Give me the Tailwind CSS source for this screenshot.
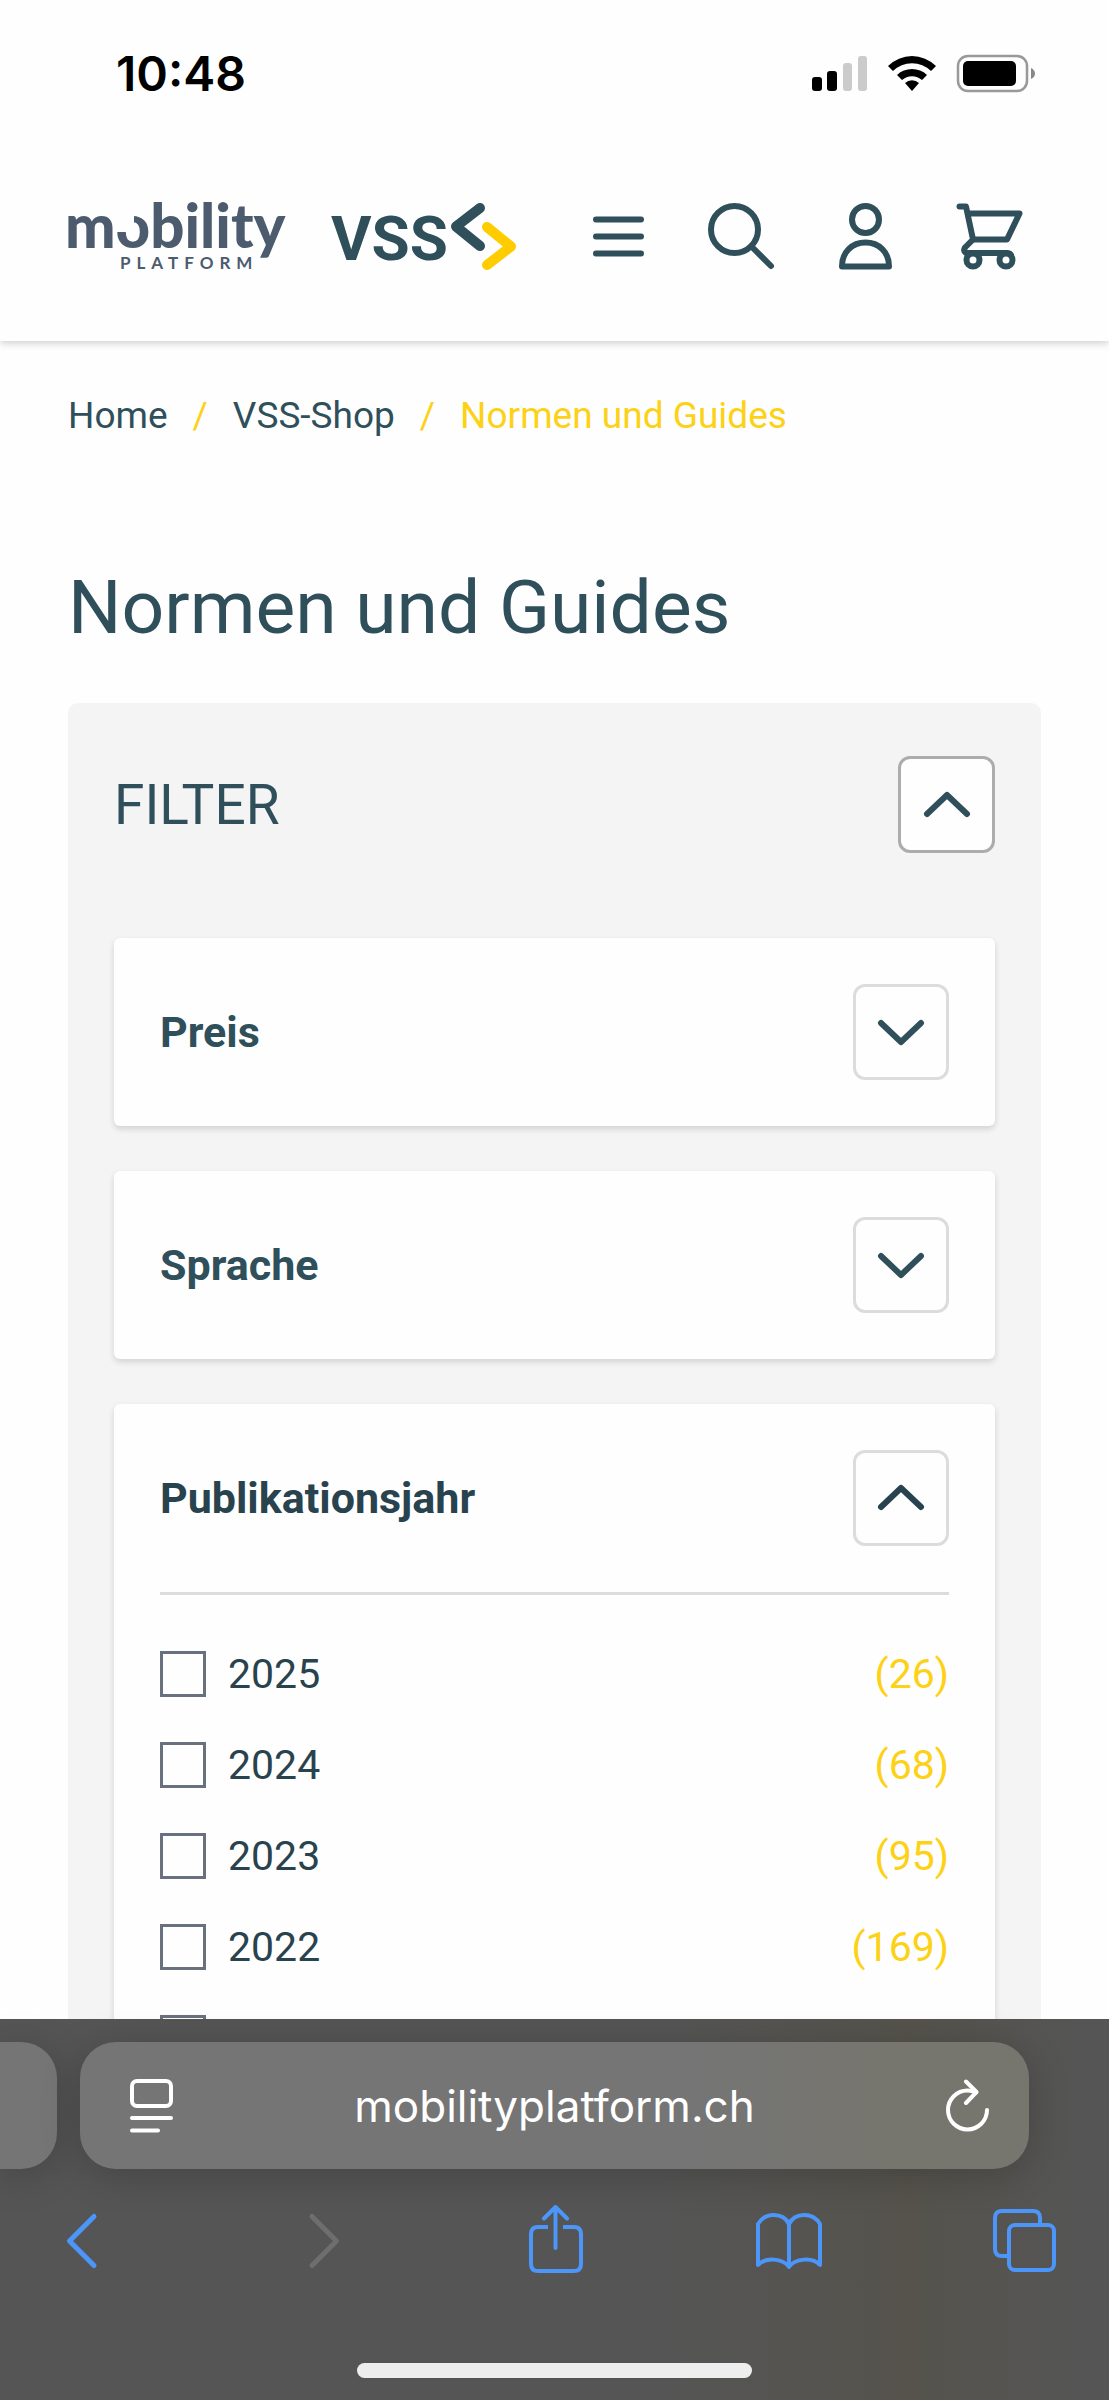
<!DOCTYPE html>
<html lang="de">

<head>
    <meta charset="UTF-8">
    <meta name="viewport" content="width=device-width, initial-scale=1.0">
    <title>Normen und Guides</title>
    <script src="https://cdn.jsdelivr.net/npm/@tailwindcss/browser@4"></script>
</head>

<body class="h-screen flex flex-col overflow-hidden bg-[#fefefe] text-[#2f4f5b] font-['Roboto',sans-serif]">

    <!-- status bar -->
    <div class="relative z-10 bg-[#fefefe] shrink-0 h-[131px] pt-[44px] pl-[116px] pr-[73px] flex items-start justify-between text-black">
        <div class="font-['Inter',sans-serif] font-semibold text-[48px] leading-[60px]">10:48</div>
        <svg class="w-[225px] h-[60px]" viewBox="0 0 225 60" aria-hidden="true">
            <rect x="1" y="33" width="10" height="14" rx="3" />
            <rect x="16" y="27" width="10" height="20" rx="3" />
            <rect x="32" y="19" width="9" height="28" rx="3" fill="#cbcbcb" />
            <rect x="47" y="12" width="9" height="35" rx="3" fill="#cbcbcb" />
            <path d="M77 22 A34 34 0 0 1 125 22 L120 27 A27 27 0 0 0 82 27Z" />
            <path d="M86 31 A22 22 0 0 1 116 31 L111 36 A15 15 0 0 0 91 36Z" />
            <path d="M94 39 A10 10 0 0 1 108 39 L101 47Z" />
            <rect x="147" y="12" width="69" height="35" rx="10" fill="none" stroke="#999" stroke-width="2.5" />
            <rect x="152" y="17" width="53" height="25" rx="5" />
            <path d="M220 24 Q224 26 224 29.500 Q224 33 220 35Z" fill="#888" />
        </svg>
    </div>

    <!-- header -->
    <header class="shrink-0 h-[210px] pl-[68px] pr-[86px] flex items-center justify-between shadow-[0_2px_8px_rgba(0,0,0,0.2)]">
        <div class="flex items-center gap-[46px]">
            <a href="#" aria-label="mobility platform">
                <svg class="w-[217px] h-[68px] overflow-visible" viewBox="0 0 217 68" fill="#4d5b6e">
                    <text x="-3" y="46" font-family="Lato" font-weight="900" font-size="60">mobility</text>
                    <!-- open upper left of the o -->
                    <rect x="48" y="11" width="18" height="19" fill="#fefefe" />
                    <text x="52" y="67" font-family="Lato" font-weight="700" font-size="17" letter-spacing="6">PLATFORM</text>
                </svg>
            </a>
            <a href="#" aria-label="VSS">
                <svg class="w-[186px] h-[68px] overflow-visible" viewBox="0 0 186 68" fill="#2f4f5b">
                    <text x="0" y="58" font-family="Roboto" font-weight="700" font-size="62">VSS</text>
                    <path d="M149 6 L125 24.500 L149 44" fill="none" stroke="#2f4f5b" stroke-width="10" stroke-linecap="round" stroke-linejoin="round" />
                    <path d="M156 25 L180 44.500 L156 63" fill="none" stroke="#ffcc00" stroke-width="10" stroke-linecap="round" stroke-linejoin="round" />
                </svg>
            </a>
        </div>
        <nav class="flex items-center gap-16">
            <button type="button" aria-label="Menü">
                <svg class="w-[53px] h-[67px]" viewBox="0 0 53 67" fill="none" stroke="#2f4f5b" stroke-width="6" stroke-linecap="round">
                    <path d="M5 16.500H50M5 33.500H50M5 50.500H50" />
                </svg>
            </button>
            <button type="button" aria-label="Suche">
                <svg class="w-[67px] h-[67px]" viewBox="0 0 67 67" fill="none" stroke="#2f4f5b" stroke-width="6" stroke-linecap="round">
                    <circle cx="26.500" cy="26.500" r="23.500" />
                    <path d="M44 44 L63 63" />
                </svg>
            </button>
            <button type="button" aria-label="Konto">
                <svg class="w-[53px] h-[67px]" viewBox="0 0 53 67" fill="none" stroke="#2f4f5b" stroke-width="6" stroke-linejoin="round">
                    <circle cx="26.500" cy="16.500" r="13.500" />
                    <path d="M3 63.500 C3 49 13 39.500 26.500 39.500 S50 49 50 63.500Z" />
                </svg>
            </button>
            <button type="button" aria-label="Warenkorb">
                <svg class="w-[67px] h-[67px]" viewBox="0 0 67 67" fill="none" stroke="#2f4f5b" stroke-width="6" stroke-linecap="round" stroke-linejoin="round">
                    <path d="M3.500 3.500H10L17 36.500L9 44.500Q7 48 10 50H51Q54 50 55 52" />
                    <path d="M12 10.500H63.500L51 36.500H17" />
                    <circle cx="17" cy="57" r="6.500" />
                    <circle cx="50" cy="57" r="6.500" />
                </svg>
            </button>
        </nav>
    </header>

    <main class="flex-1 min-h-0 overflow-y-auto [scrollbar-width:none] px-[68px] pt-[50px]">
        <nav aria-label="Breadcrumb" class="flex gap-[25px] text-[37px] leading-[50px]">
            <a href="#">Home</a>
            <span class="text-[#fdd116]">/</span>
            <a href="#">VSS-Shop</a>
            <span class="text-[#fdd116]">/</span>
            <a href="#" class="text-[#fdd116]">Normen und Guides</a>
        </nav>

        <h1 class="mt-[121px] text-[75px] leading-[90px]">Normen und Guides</h1>

        <section class="mt-[51px] px-[46px] pt-[53px] pb-[46px] bg-[#f4f4f4] rounded-[10px]">
            <div class="flex items-center justify-between">
                <h2 class="text-[55px] leading-[60px]">FILTER</h2>
                <button type="button" aria-label="Filter schliessen" class="size-[97px] flex items-center justify-center bg-[#fefefe] border-[3px] border-[#acacac] rounded-xl">
                    <svg class="w-[48px] h-[28px]" viewBox="0 0 48 28" fill="none" stroke="#2f4f5b" stroke-width="6" stroke-linecap="round" stroke-linejoin="round"><path d="M4 23 L24 4 L44 23" /></svg>
                </button>
            </div>

            <div class="mt-[85px] flex flex-col gap-[45px]">
                <div class="p-[46px] flex items-center justify-between bg-[#fefefe] rounded-md shadow-[0_3px_6px_rgba(0,0,0,0.14)]">
                    <h3 class="text-[43px] leading-[50px] font-bold">Preis</h3>
                    <button type="button" aria-label="Preis öffnen" class="size-[96px] flex items-center justify-center border-[3px] border-[#dcdcdc] rounded-xl">
                        <svg class="w-[48px] h-[28px]" viewBox="0 0 48 28" fill="none" stroke="#2f4f5b" stroke-width="6" stroke-linecap="round" stroke-linejoin="round"><path d="M4 5 L24 24 L44 5" /></svg>
                    </button>
                </div>

                <div class="p-[46px] flex items-center justify-between bg-[#fefefe] rounded-md shadow-[0_3px_6px_rgba(0,0,0,0.14)]">
                    <h3 class="text-[43px] leading-[50px] font-bold">Sprache</h3>
                    <button type="button" aria-label="Sprache öffnen" class="size-[96px] flex items-center justify-center border-[3px] border-[#dcdcdc] rounded-xl">
                        <svg class="w-[48px] h-[28px]" viewBox="0 0 48 28" fill="none" stroke="#2f4f5b" stroke-width="6" stroke-linecap="round" stroke-linejoin="round"><path d="M4 5 L24 24 L44 5" /></svg>
                    </button>
                </div>

                <div class="p-[46px] bg-[#fefefe] rounded-md shadow-[0_3px_6px_rgba(0,0,0,0.14)]">
                    <div class="pb-[46px] flex items-center justify-between border-b-[3px] border-[#dcdcdc] text-[#29434e]">
                        <h3 class="text-[43px] leading-[50px] font-bold">Publikationsjahr</h3>
                        <button type="button" aria-label="Publikationsjahr schliessen" class="size-[96px] flex items-center justify-center border-[3px] border-[#dcdcdc] rounded-xl">
                            <svg class="w-[48px] h-[28px]" viewBox="0 0 48 28" fill="none" stroke="#29434e" stroke-width="6" stroke-linecap="round" stroke-linejoin="round"><path d="M4 23 L24 4 L44 23" /></svg>
                        </button>
                    </div>
                    <ul class="pt-[56px] flex flex-col gap-[45px]" id="yearList"></ul>
                </div>
            </div>
        </section>
    </main>

    <!-- browser bar -->
    <footer class="shrink-0 h-[381px] pt-[23px] pb-[22px] flex flex-col bg-[linear-gradient(90deg,#555_60%,#55534c_82%,#555_97%)]">
        <div class="flex gap-[23px] pr-[80px]">
            <div class="w-[57px] h-[127px] bg-[#757575] rounded-r-[36px] shadow-[0_6px_40px_rgba(0,0,0,0.2)]"></div>
            <div class="flex-1 h-[127px] pl-[50px] pr-[40px] flex items-center justify-between text-white rounded-[36px] shadow-[0_6px_40px_rgba(0,0,0,0.2)] bg-[linear-gradient(90deg,#757575_65%,#76756e_85%)]">
                <button type="button" aria-label="Seitenmenü">
                    <svg class="w-[43px] h-[54px]" viewBox="0 0 43 54" fill="none" stroke="white" stroke-width="4" stroke-linecap="round">
                        <rect x="2" y="2" width="39" height="25" rx="5" />
                        <path d="M2 39H41M2 51.500H28" />
                    </svg>
                </button>
                <span class="font-['Inter',sans-serif] text-[44px] leading-[54px]">mobilityplatform.ch</span>
                <button type="button" aria-label="Neu laden">
                    <svg class="w-[53px] h-[54px]" viewBox="-10 0 53 54" fill="none" stroke="white" stroke-width="4" stroke-linecap="round" stroke-linejoin="round">
                        <path d="M30 13.500 C27 12 24 11.500 21.500 11.500 A19.500 19.500 0 1 0 41 31" />
                        <path d="M20 2.500 L30.500 13 L20 24" />
                    </svg>
                </button>
            </div>
        </div>

        <div class="mt-[36px] pl-[48px] pr-[50px] flex justify-between">
            <button type="button" aria-label="Zurück">
                <svg class="w-[68px] h-[70px]" viewBox="0 0 68 70" fill="none" stroke="#4b96f8" stroke-width="5" stroke-linecap="round" stroke-linejoin="round"><path d="M46 11.500 L21.500 36 L46 60.500" /></svg>
            </button>
            <button type="button" aria-label="Vor">
                <svg class="w-[68px] h-[70px]" viewBox="0 0 68 70" fill="none" stroke="#6e6e6e" stroke-width="5" stroke-linecap="round" stroke-linejoin="round"><path d="M28 11.500 L52.500 36 L28 60.500" /></svg>
            </button>
            <button type="button" aria-label="Teilen">
                <svg class="w-[68px] h-[70px]" viewBox="0 0 68 70" fill="none" stroke="#4b96f8" stroke-width="4" stroke-linecap="round" stroke-linejoin="round">
                    <path stroke-linecap="butt" d="M28 22H18Q11 22 11 29V59Q11 66 18 66H54Q61 66 61 59V29Q61 22 54 22H43" />
                    <path d="M35.500 43V3M24 13.500 L35.500 2 L47 13.500" />
                </svg>
            </button>
            <button type="button" aria-label="Lesezeichen">
                <svg class="w-[68px] h-[70px]" viewBox="0 0 68 70" fill="none" stroke="#4b96f8" stroke-width="4" stroke-linecap="round" stroke-linejoin="round">
                    <path d="M34 62 C28 53 10 52 3 60 V19 C10 7 28 7 34 19 C40 7 58 7 65 19 V60 C58 52 40 53 34 62Z M34 19V60" />
                </svg>
            </button>
            <button type="button" aria-label="Tabs">
                <svg class="w-[68px] h-[70px]" viewBox="0 0 68 70" fill="none" stroke="#4b96f8" stroke-width="4">
                    <rect x="18" y="20" width="45" height="45" rx="6" />
                    <path d="M18 51H11Q4 51 4 44V13Q4 6 11 6H42Q49 6 49 13V20" />
                </svg>
            </button>
        </div>

        <div class="mt-auto mx-auto w-[395px] h-[15px] rounded-full bg-[#eee]"></div>
    </footer>

</body>

<script>
    let yearList = document.querySelector("#yearList")

    let years = [
        { year: 2025, count: 26 },
        { year: 2024, count: 68 },
        { year: 2023, count: 95 },
        { year: 2022, count: 169 },
        { year: 2021, count: 134 },
    ]

    years.map((v) => {
        yearList.innerHTML += `
            <li class="h-[46px] flex items-center justify-between text-[41px] leading-[46px]">
                <label class="flex items-center gap-[22px] text-[#29434e]">
                    <input type="checkbox" class="appearance-none size-[46px] border-[3px] border-[#69707e] checked:bg-[#69707e]">
                    ${v.year}
                </label>
                <span class="text-[#fdd116]">(${v.count})</span>
            </li>
        `
    })
</script>

</html>
